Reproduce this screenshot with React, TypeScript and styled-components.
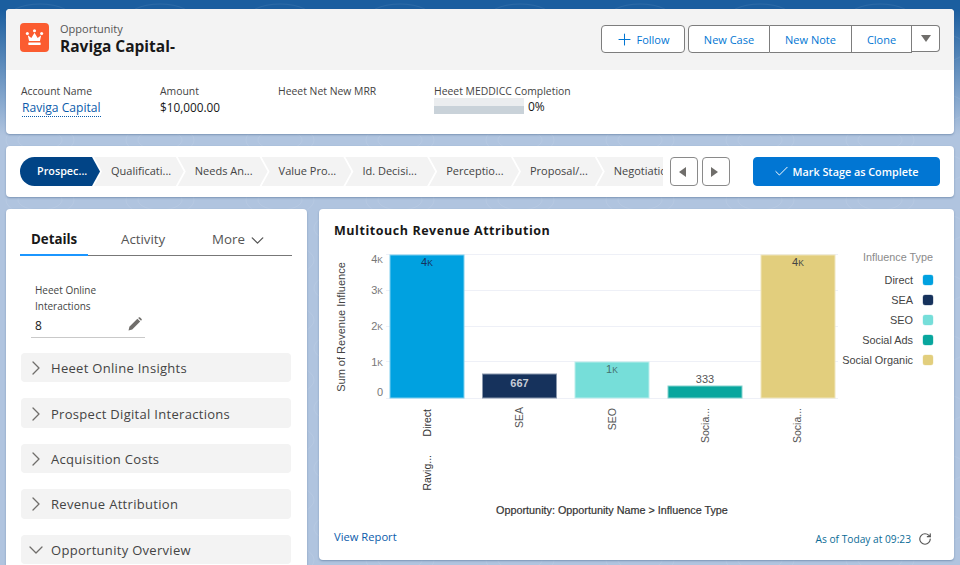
import React from "react";
import styled, { createGlobalStyle } from "styled-components";
import { Check, ChevronDown, ChevronRight, Plus, RotateCw } from "lucide-react";

const Global = createGlobalStyle`
  html, body { margin: 0; padding: 0; height: 565px; overflow: hidden; background: #b0c4df; }
  * { box-sizing: border-box; }
  #root { height: 565px; }
`;

const UI = `"Open Sans", "Noto Sans", "Liberation Sans", sans-serif`;
const CHART = `"Liberation Sans", Arial, sans-serif`;

const Page = styled.div`
  position: relative;
  height: 565px;
  overflow: hidden;
  padding: 9px 6px 0;
  font-family: ${UI};
  font-size: 11px;
  color: #181818;
  background: linear-gradient(180deg, #1b5e9f 0, #1b5e9f 10px, #b0c4df 135px, #b0c4df 100%);
`;
const Contours = styled.svg`
  position: absolute;
  inset: 0;
  width: 960px;
  height: 565px;
  pointer-events: none;
`;
const Card = styled.section`
  position: relative;
  background: #fff;
  border-radius: 4px;
  box-shadow: 0 1px 2px rgba(60, 90, 130, 0.45);
  overflow: hidden;
`;
const HeaderCard = styled(Card)`
  height: 125px;
`;
const Highlights = styled.div`
  height: 61px;
  background: #f3f3f3;
  display: flex;
  align-items: flex-start;
  padding: 14px 14px 0;
`;
const RecordIcon = styled.div`
  width: 29px;
  height: 29px;
  border-radius: 4px;
  background: #fb5c30;
  display: flex;
  align-items: center;
  justify-content: center;
`;
const Titles = styled.div`
  margin-left: 11px;
  flex: 1;
  margin-top: -2px;
`;
const ObjectName = styled.div`
  font-size: 11px;
  line-height: 15px;
  color: #555;
`;
const RecordName = styled.div`
  font-size: 15.5px;
  line-height: 21px;
  font-weight: 700;
  color: #181818;
`;
const Actions = styled.div`
  display: flex;
  align-items: flex-start;
  margin-top: 2px;
`;
const OutlineButton = styled.button`
  height: 28px;
  width: ${(p: { $w: number }) => p.$w}px;
  border: 1px solid #7d7d7d;
  background: #fff;
  color: #0176d3;
  font: 11px ${UI};
  display: inline-flex;
  align-items: center;
  justify-content: center;
  padding: 0;
`;
const FollowButton = styled(OutlineButton)`
  border-radius: 4px;
  margin-right: 3px;
  gap: 3px;
  padding-right: 2px;
`;
const GroupFirst = styled(OutlineButton)`
  border-radius: 4px 0 0 4px;
`;
const GroupMid = styled(OutlineButton)`
  border-left: 0;
`;
const GroupLast = styled(OutlineButton)`
  border-left: 0;
  height: 27px;
  border-radius: 0 4px 4px 0;
`;
const Fields = styled.div`
  display: flex;
  padding: 14px 15px 0;
`;
const Field = styled.div<{ $w: number }>`
  width: ${(p) => p.$w}px;
  flex: none;
`;
const FieldLabel = styled.div`
  font-size: 10.4px;
  line-height: 15px;
  color: #444;
`;
const FieldValue = styled.div`
  font-size: 11.8px;
  line-height: 16px;
`;
const AccountLink = styled.a`
  display: inline-block;
  margin-left: 1px;
  margin-top: 1px;
  font-size: 12.1px;
  line-height: 16px;
  color: #0b5cab;
  border-bottom: 1px dotted #0b5cab;
`;
const MeterRow = styled.div`
  display: flex;
  align-items: flex-start;
  gap: 4px;
  margin-top: -1px;
`;
const Meter = styled.div`
  width: 90px;
  height: 16px;
  background: linear-gradient(180deg, #ebedef 50%, #c9d2d9 50%);
`;
const MeterValue = styled.span`
  font-size: 12px;
  line-height: 18px;
`;
const PathCard = styled(Card)`
  height: 51px;
  margin-top: 12px;
  display: flex;
  align-items: center;
  padding: 0 14px;
`;
const Steps = styled.div`
  width: 643px;
  height: 29px;
  overflow: hidden;
  display: flex;
  flex: none;
`;
const Step = styled.div`
  flex: none;
  width: 89.8px;
  height: 29px;
  margin-right: -6px;
  padding-left: 17px;
  background: #f3f3f3;
  color: #444;
  font-size: 11px;
  line-height: 28px;
  white-space: nowrap;
  clip-path: polygon(0 0, calc(100% - 8px) 0, 100% 50%, calc(100% - 8px) 100%, 0 100%, 8px 50%);
`;
const ActiveStep = styled(Step)`
  width: 80px;
  background: #014486;
  color: #fff;
  font-size: 10.8px;
  font-weight: 600;
  border-radius: 15px 0 0 15px;
  clip-path: polygon(0 0, calc(100% - 8px) 0, 100% 50%, calc(100% - 8px) 100%, 0 100%);
`;
const NavButton = styled.button<{ $ml: number; $pr: number }>`
  width: 28px;
  height: 29px;
  margin-left: ${(p) => p.$ml}px;
  border: 1px solid #8a8a8a;
  border-radius: 4px;
  background: #fff;
  padding: 0 ${(p) => p.$pr}px 0 0;
  display: flex;
  align-items: center;
  justify-content: center;
`;
const CompleteButton = styled.button`
  width: 187px;
  height: 29px;
  margin-left: 23px;
  background: #0176d3;
  border: 1px solid #0176d3;
  border-radius: 4px;
  color: #fff;
  font: 600 10.8px ${UI};
  display: flex;
  align-items: center;
  justify-content: center;
  gap: 3px;
  padding: 0 2px 0 0;
`;
const Columns = styled.div`
  display: flex;
  gap: 12px;
  margin-top: 12px;
`;
const LeftCard = styled(Card)`
  width: 301px;
  height: 370px;
  padding: 15px 15px 0 14px;
`;
const RightCard = styled(Card)`
  width: 635px;
  height: 351px;
`;
const Tabs = styled.div`
  display: flex;
  height: 32px;
  width: 272px;
  border-bottom: 1px solid #777;
  position: relative;
`;
const Tab = styled.div<{ $w: number; $active?: boolean }>`
  width: ${(p) => p.$w}px;
  padding-left: ${(p) => (p.$active ? 11 : 0)}px;
  height: 32px;
  margin-bottom: -1px;
  font-size: 13.3px;
  line-height: 30px;
  font-weight: ${(p) => (p.$active ? 700 : 400)};
  color: ${(p) => (p.$active ? "#181818" : "#555")};
  border-bottom: ${(p) => (p.$active ? "2px solid #1b96ff" : "0")};
  display: flex;
  align-items: flex-start;
  gap: 2px;
`;
const InfoField = styled.div`
  margin: 26px 0 0 11px;
  width: 114px;
  height: 56px;
  border-bottom: 1px solid #c9c9c9;
  padding-left: 4px;
  position: relative;
`;
const InfoLabel = styled.div`
  font-size: 10px;
  line-height: 16px;
  color: #444;
`;
const InfoValue = styled.div`
  font-size: 12px;
  line-height: 20px;
  margin-top: 2px;
`;
const EditIcon = styled.svg`
  position: absolute;
  right: 3px;
  bottom: 6px;
`;
const Sections = styled.div`
  margin: 15px 0 0 1px;
  display: flex;
  flex-direction: column;
  gap: 16px;
`;
const SectionBar = styled.div`
  height: 29.4px;
  flex: none;
  width: 270px;
  background: #f3f3f3;
  border-radius: 4px;
  display: flex;
  align-items: center;
  padding: 1px 0 0 3px;
  gap: 3px;
  font-size: 13px;
  color: #444;
  letter-spacing: 0.3px;
`;
const ChartTitle = styled.h2`
  margin: 0;
  padding: 13px 15px 0;
  height: 36px;
  font-size: 12.5px;
  line-height: 18px;
  font-weight: 700;
  color: #181818;
  letter-spacing: 0.55px;
`;
const ChartSvg = styled.svg`
  display: block;
  font-family: ${CHART};
`;
const ChartFooter = styled.footer`
  display: flex;
  justify-content: space-between;
  padding: 4px 22px 0 15px;
  height: 30px;
`;
const ViewReport = styled.a`
  font-size: 11.2px;
  line-height: 16px;
  color: #0b5cab;
`;
const Freshness = styled.div`
  display: flex;
  align-items: center;
  gap: 7px;
  font-size: 10.2px;
  color: #0b6b96;
  height: 16px;
  margin-top: 2px;
`;

const bars = [
  { x: 390, top: 255, c: "#00a1e0", b: "#7fd0ef" },
  { x: 482.5, top: 374, c: "#16325c", b: "#8a98ad" },
  { x: 575, top: 362, c: "#76ded9", b: "#bbeeec" },
  { x: 668, top: 386, c: "#08a69e", b: "#83d2ce" },
  { x: 761, top: 255, c: "#e2ce7d", b: "#f0e6be" },
];
const legend = [
  ["Direct", "#00a1e0"],
  ["SEA", "#16325c"],
  ["SEO", "#76ded9"],
  ["Social Ads", "#08a69e"],
  ["Social Organic", "#e2ce7d"],
];
const yTicks = [
  ["4", 259],
  ["3", 290],
  ["2", 326],
  ["1", 362],
] as const;
const xLabels = [
  ["Direct", 431, 409, "#333"],
  ["Ravig...", 431, 455, "#333"],
  ["SEA", 523, 407, "#555"],
  ["SEO", 616, 408, "#555"],
  ["Socia...", 709, 408, "#555"],
  ["Socia...", 801, 408, "#555"],
] as const;

function Chart() {
  return (
    <ChartSvg width={635} height={280} viewBox="319 245 635 280">
      {[254.5, 290.5, 326.5, 361.5, 398.5].map((y) => (
        <line key={y} x1={386} x2={838} y1={y} y2={y} stroke="#eef0f7" />
      ))}
      {bars.map((b) => (
        <rect key={b.x} x={b.x} y={b.top} width={74} height={398 - b.top} fill={b.c} stroke={b.b} strokeWidth={1} />
      ))}
      <text transform="translate(345 327) rotate(-90)" textAnchor="middle" fontSize={11} fill="#444">
        Sum of Revenue Influence
      </text>
      {yTicks.map(([t, y]) => (
        <text key={t} x={383} y={y + 4} textAnchor="end" fontSize={11} fill="#777">
          {t}
          <tspan fontSize={8.5}>K</tspan>
        </text>
      ))}
      <text x={383} y={396} textAnchor="end" fontSize={11} fill="#777">0</text>
      <text x={427} y={266} textAnchor="middle" fontSize={11} fill="#16325c">4<tspan fontSize={8.5}>K</tspan></text>
      <text x={519.5} y={387} textAnchor="middle" fontSize={11} fontWeight={700} fill="#c6ccd6">667</text>
      <text x={612} y={373} textAnchor="middle" fontSize={11} fill="#46706e">1<tspan fontSize={8.5}>K</tspan></text>
      <text x={705} y={383} textAnchor="middle" fontSize={11} fill="#555">333</text>
      <text x={798} y={266} textAnchor="middle" fontSize={11} fill="#444">4<tspan fontSize={8.5}>K</tspan></text>
      {xLabels.map(([t, x, y, c]) => (
        <text key={t + x + y} transform={`translate(${x} ${y}) rotate(-90)`} textAnchor="end" fontSize={10.5} fill={c}>
          {t}
        </text>
      ))}
      <text x={933} y={261} textAnchor="end" fontSize={10.8} fill="#8a8a8a">Influence Type</text>
      {legend.map(([t, c], i) => (
        <g key={t}>
          <text x={913} y={284 + i * 20} textAnchor="end" fontSize={10.9} fill="#444">{t}</text>
          <rect x={923} y={275 + i * 20} width={10} height={10} rx={2} fill={c} stroke={c} strokeOpacity={0.35} strokeWidth={1} />
        </g>
      ))}
      <text x={612} y={514} textAnchor="middle" fontSize={10.8} fill="#333" stroke="#333" strokeWidth={0.2}>
        Opportunity: Opportunity Name &gt; Influence Type
      </text>
    </ChartSvg>
  );
}

const sections = ["Heeet Online Insights", "Prospect Digital Interactions", "Acquisition Costs", "Revenue Attribution"];
const stages = ["Qualificati...", "Needs An...", "Value Pro...", "Id. Decisi...", "Perceptio...", "Proposal/...", "Negotiation"];

export default function App() {
  return (
    <>
      <Global />
      <Page>
        <Contours aria-hidden="true">
          <defs>
            <pattern id="topo" width="120" height="60" patternUnits="userSpaceOnUse">
              <ellipse cx="40" cy="20" rx="34" ry="16" fill="none" stroke="#fff" strokeOpacity="0.07" />
              <ellipse cx="40" cy="20" rx="22" ry="10" fill="none" stroke="#fff" strokeOpacity="0.07" />
              <ellipse cx="100" cy="48" rx="26" ry="14" fill="none" stroke="#fff" strokeOpacity="0.07" />
            </pattern>
          </defs>
          <rect width="960" height="565" fill="url(#topo)" />
        </Contours>
        <HeaderCard>
          <Highlights>
            <RecordIcon>
              <svg width="19" height="17" viewBox="0 0 21 19" fill="#fff">
                <circle cx="2.5" cy="5" r="1.7" />
                <circle cx="10.5" cy="2" r="1.7" />
                <circle cx="18.5" cy="5" r="1.7" />
                <path d="M3 7 L7 10 L10.5 4.3 L14 10 L18 7 L16.6 13.5 H4.4 Z" />
                <rect x="3.6" y="15.2" width="13.8" height="2.6" rx="0.5" />
              </svg>
            </RecordIcon>
            <Titles>
              <ObjectName>Opportunity</ObjectName>
              <RecordName>Raviga Capital-</RecordName>
            </Titles>
            <Actions>
              <FollowButton $w={84}>
                <Plus size={19} strokeWidth={1.3} />
                Follow
              </FollowButton>
              <GroupFirst $w={82}>New Case</GroupFirst>
              <GroupMid $w={82}>New Note</GroupMid>
              <GroupMid $w={60}>Clone</GroupMid>
              <GroupLast $w={28}>
                <svg width="10" height="7" viewBox="0 0 10 7"><path d="M0 0H10L5 7Z" fill="#706e6b" /></svg>
              </GroupLast>
            </Actions>
          </Highlights>
          <Fields>
            <Field $w={139}>
              <FieldLabel>Account Name</FieldLabel>
              <AccountLink>Raviga Capital</AccountLink>
            </Field>
            <Field $w={118}>
              <FieldLabel>Amount</FieldLabel>
              <FieldValue>$10,000.00</FieldValue>
            </Field>
            <Field $w={156}>
              <FieldLabel>Heeet Net New MRR</FieldLabel>
            </Field>
            <Field $w={160}>
              <FieldLabel>Heeet MEDDICC Completion</FieldLabel>
              <MeterRow>
                <Meter />
                <MeterValue>0%</MeterValue>
              </MeterRow>
            </Field>
          </Fields>
        </HeaderCard>
        <PathCard>
          <Steps>
            <ActiveStep>Prospec...</ActiveStep>
            {stages.map((s) => (
              <Step key={s}>{s}</Step>
            ))}
          </Steps>
          <NavButton $ml={7} $pr={4}>
            <svg width="7" height="10" viewBox="0 0 7 10"><path d="M7 0V10L0 5Z" fill="#706e6b" /></svg>
          </NavButton>
          <NavButton $ml={4} $pr={4}>
            <svg width="7" height="10" viewBox="0 0 7 10"><path d="M0 0V10L7 5Z" fill="#706e6b" /></svg>
          </NavButton>
          <CompleteButton>
            <Check size={17} strokeWidth={1.4} />
            Mark Stage as Complete
          </CompleteButton>
        </PathCard>
        <Columns>
          <LeftCard>
            <Tabs>
              <Tab $w={68} $active>Details</Tab>
              <Tab $w={33} />
              <Tab $w={91}>Activity</Tab>
              <Tab $w={80}>
                More
                <ChevronDown size={21} strokeWidth={1.5} style={{ marginTop: 6 }} />
              </Tab>
            </Tabs>
            <InfoField>
              <InfoLabel>Heeet Online<br />Interactions</InfoLabel>
              <InfoValue>8</InfoValue>
              <EditIcon width="14" height="14" viewBox="0 0 14 14" fill="#706e6b">
                <path d="M0.5 13.5 L1.4 9.8 L9.4 1.8 L12.2 4.6 L4.2 12.6 Z" />
                <path d="M10.2 1 L11 0.3 Q11.6 0 12.1 0.4 L13.6 1.9 Q14 2.4 13.7 3 L13 3.8 Z" />
              </EditIcon>
            </InfoField>
            <Sections>
              {sections.map((s) => (
                <SectionBar key={s}>
                  <ChevronRight size={24} strokeWidth={1.3} color="#706e6b" />
                  {s}
                </SectionBar>
              ))}
              <SectionBar>
                <ChevronDown size={24} strokeWidth={1.3} color="#706e6b" />
                Opportunity Overview
              </SectionBar>
            </Sections>
          </LeftCard>
          <RightCard>
            <ChartTitle>Multitouch Revenue Attribution</ChartTitle>
            <Chart />
            <ChartFooter>
              <ViewReport>View Report</ViewReport>
              <Freshness>
                As of Today at 09:23
                <RotateCw size={14} strokeWidth={2} color="#555" />
              </Freshness>
            </ChartFooter>
          </RightCard>
        </Columns>
      </Page>
    </>
  );
}
